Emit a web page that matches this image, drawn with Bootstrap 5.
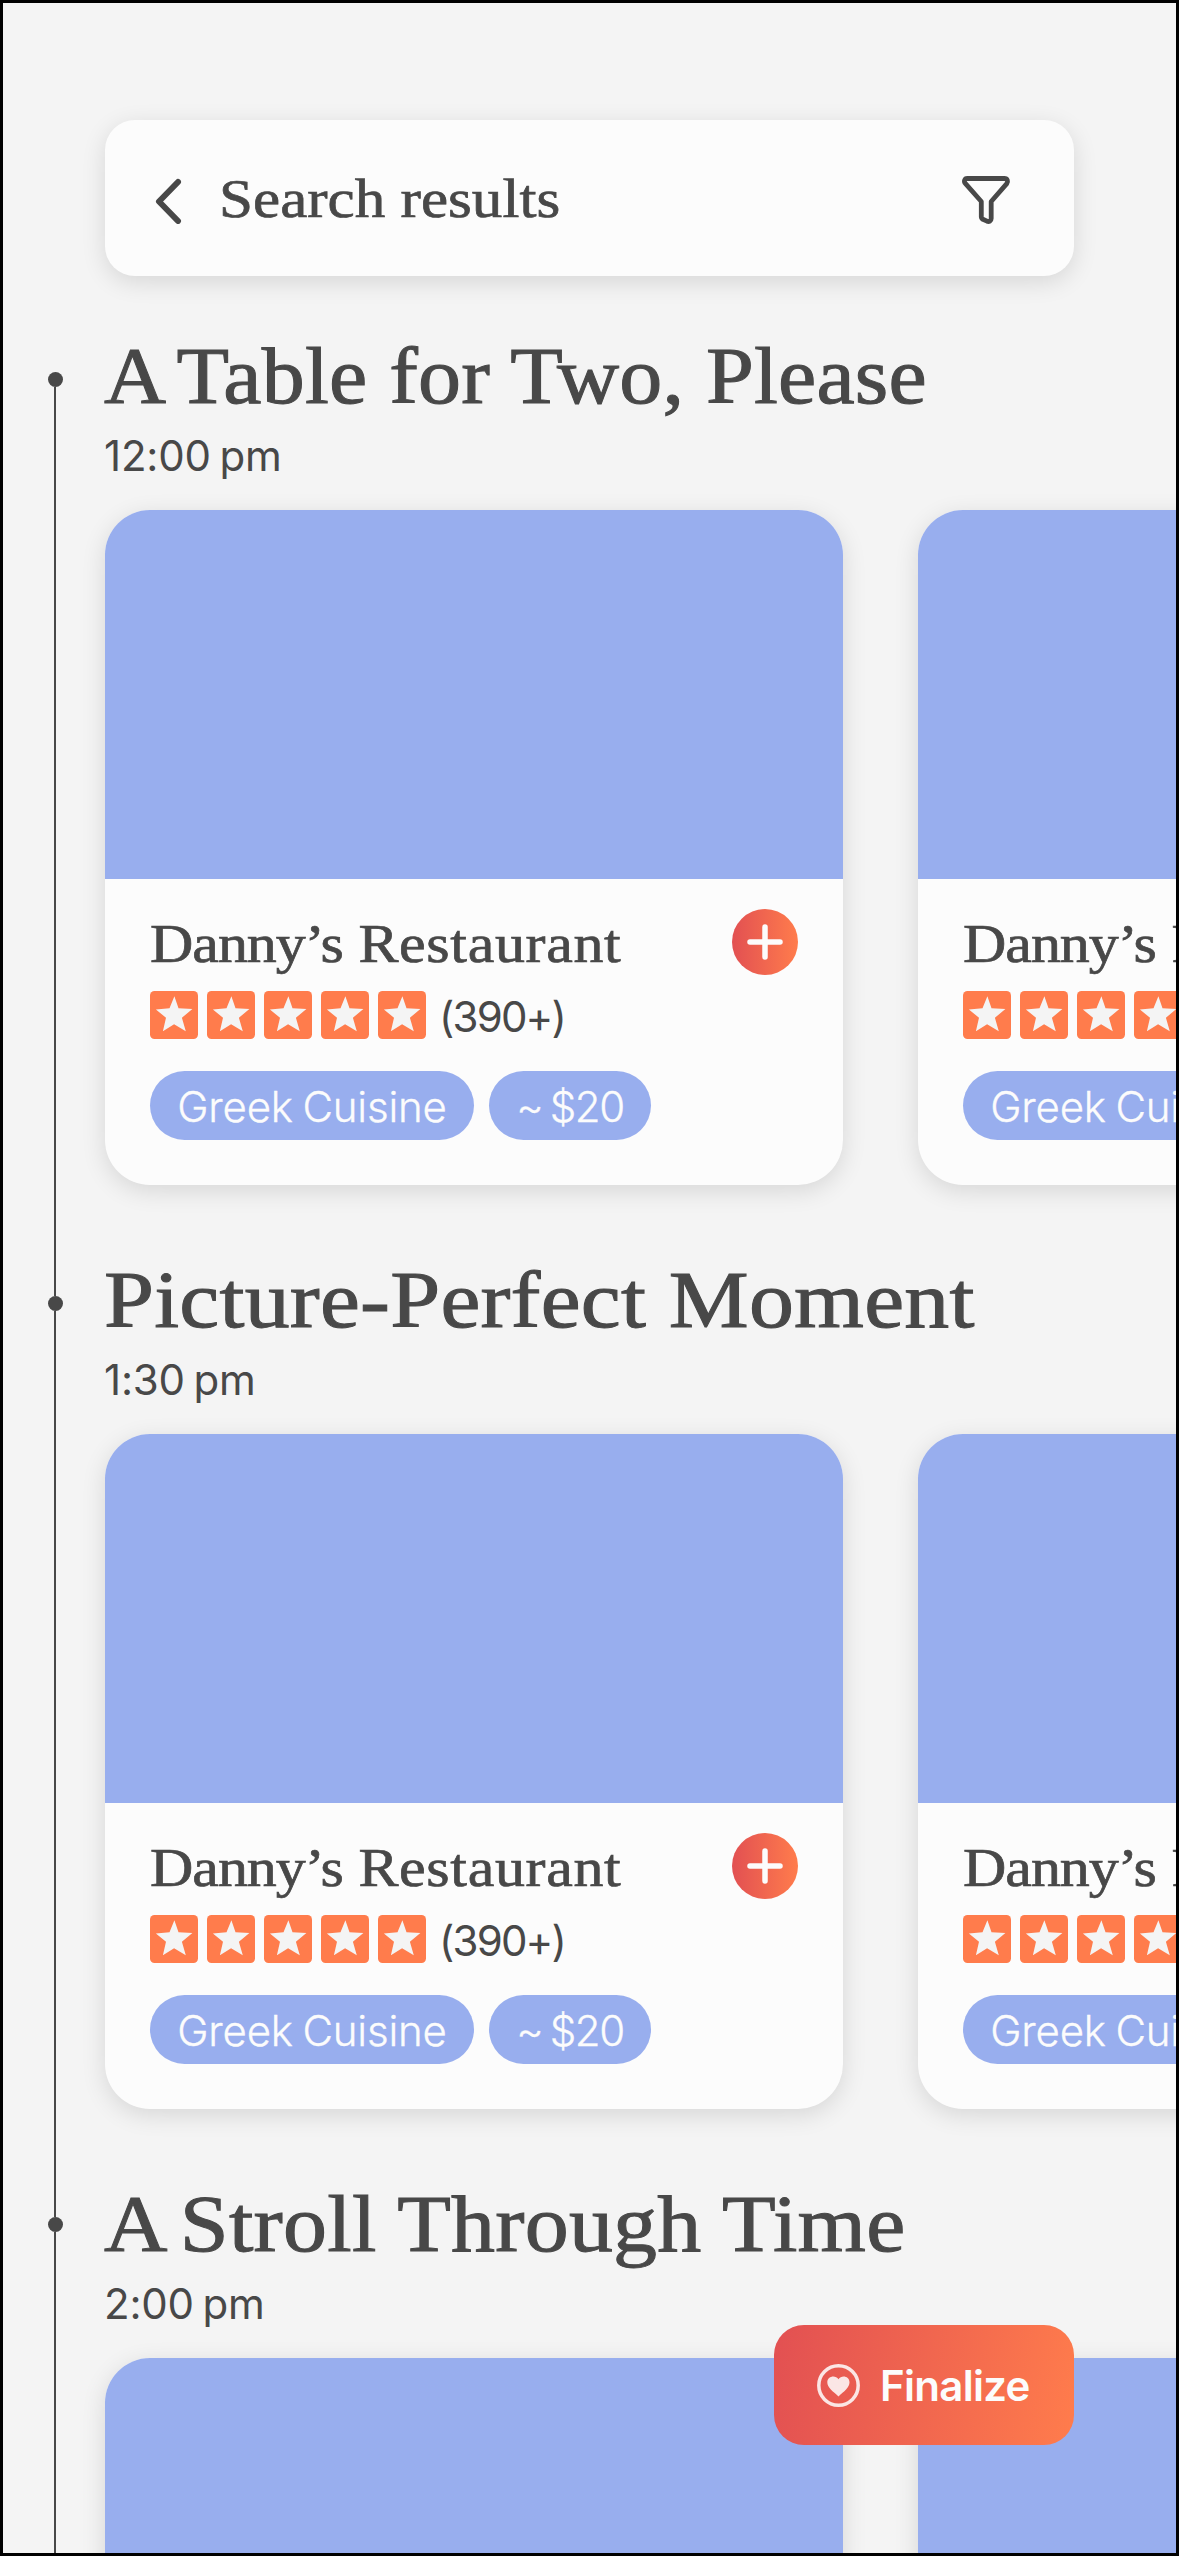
<!DOCTYPE html>
<html lang="en">
<head>
<meta charset="utf-8">
<meta name="viewport" content="width=device-width, initial-scale=1">
<title>Search results</title>
<link href="https://cdn.jsdelivr.net/npm/bootstrap@5.3.0/dist/css/bootstrap.min.css" rel="stylesheet">
<style>
  body { margin: 0; background: #f4f4f4; color: #484848; font-family: Inter, "Liberation Sans", sans-serif; font-size: 42px; }
  .screen { width: 1179px; height: 2556px; border: 3px solid #000; }
  /* Expanded serif: regular letterforms widened from their left edge */
  .serif { font-family: "Liberation Serif", serif; font-weight: 400; -webkit-text-stroke: .7px currentColor; transform-origin: 0 50%; white-space: nowrap; }
  .soft-shadow { box-shadow: 0 6px 24px rgba(0, 0, 0, .12); }
  .topbar { margin: 117px 102px 42px; height: 156px; border-radius: 30px; background: #fcfcfc; padding: 0 60px 0 48px; }
  .topbar-title { font-size: 54px; line-height: 66px; transform: scaleX(1.132); margin: 2px 0 0 34px; }
  .stop { height: 924px; }
  .rail { width: 102px; flex: none; padding-left: 1px; }
  .rail-line { width: 2px; background: #484848; }
  .rail-top { height: 54px; }
  .stop:last-child .rail-top { height: 51px; }
  .rail-start { background: transparent; }
  .rail-dot { width: 15px; height: 15px; border-radius: 50%; background: #484848; margin-left: 1px; }
  .stop-title { font-size: 80px; line-height: 96px; margin: 10px 0 0 -1px; width: max-content; letter-spacing: .2px; -webkit-text-stroke-width: 1px; }
  .wide-table { transform: scaleX(1.075); }
  .wide-picture { transform: scaleX(1.123); }
  .wide-stroll { transform: scaleX(1.099); }
  .tight-a { letter-spacing: -9px; }
  .stop-time { line-height: 50px; margin: 7px 0 29px -1px; word-spacing: -3px; letter-spacing: -.2px; }
  .places { gap: 75px; }
  .place { width: 738px; height: 675px; flex: none; border: 0; border-radius: 45px; background: #fcfcfc; color: inherit; }
  .place-photo { height: 369px; background: #98aeee; border-radius: 45px 45px 0 0; }
  .place-body { padding: 30px 45px 45px; }
  .place-head { height: 66px; }
  .place-name { font-size: 54px; line-height: 66px; letter-spacing: .6px; transform: scaleX(1.11); margin: 2px 0 0; }
  .tight-name { letter-spacing: -.9px; }
  .warm { background: linear-gradient(100deg, #e25052, #ff7c4c); }
  .add-btn { width: 66px; height: 66px; border: 0; padding: 0; border-radius: 50%; background: linear-gradient(90deg, #e25052, #ff7c4c); }
  .rating { gap: 9px; margin-top: 16px; height: 48px; }
  .reviews { margin: 4px 0 0 4px; letter-spacing: -1.8px; line-height: 50px; }
  .tags { gap: 15px; margin-top: 32px; }
  .tag { height: 69px; line-height: 71px; border-radius: 35px; background: #98aeee; color: #fcfcfc; font-weight: 300; text-align: center; white-space: nowrap; -webkit-text-stroke: .3px currentColor; }
  .tag-kind { width: 324px; word-spacing: -2px; letter-spacing: -.2px; }
  .tag-price { width: 162px; word-spacing: -3px; letter-spacing: -1.4px; }
  .finalize { right: 102px; bottom: 108px; width: 300px; height: 120px; border: 0; border-radius: 30px; color: #fcfcfc; padding: 0 0 0 42px; font-weight: 600; letter-spacing: -.7px; }
  .finalize svg { margin-right: 19px; }
  svg { display: block; flex: none; }
</style>
</head>
<body>
<svg width="0" height="0" class="position-absolute" aria-hidden="true">
  <symbol id="star" viewBox="0 0 48 48">
    <rect width="48" height="48" rx="4.5" fill="#ff7c4c"/>
    <path fill="#f4f4f4" d="M24.4 5.3 28.500 17.200 42.400 18 31.900 26.800 35.800 40.200 24.100 33.300 12.900 40.200 16 26.800 5.900 18.600 19.500 17.200Z"/>
  </symbol>
</svg>
<main class="screen position-relative overflow-hidden">
  <header class="topbar soft-shadow d-flex align-items-center">
    <svg width="32" height="52" viewBox="0 0 32 52" fill="none" stroke="#484848" stroke-width="6" stroke-linecap="round" stroke-linejoin="round"><path d="M25 10 6 29.500 25 49"/></svg>
    <h1 class="topbar-title serif">Search results</h1>
    <svg class="ms-auto" width="56" height="56" viewBox="0 0 56 56" fill="none" stroke="#484848" stroke-width="4.800" stroke-linejoin="round"><path d="M9.300 8.500H46.300C49.500 8.500 50.300 11.500 48.800 13.600L33.200 31.500V48.500C33.200 51 31 52 29 51.200L24.300 49Q23.300 48.300 23.300 47V31.500L7.500 13.600C5.500 11.500 6.500 8.500 9.300 8.500Z"/></svg>
  </header>
  <div id="stops"></div>
  <button class="finalize warm position-absolute d-flex align-items-center">
    <svg width="45" height="45" viewBox="0 0 45 45"><g opacity=".85"><circle cx="22.500" cy="22.500" r="19.700" fill="none" stroke="#fff" stroke-width="3.500"/><path fill="#fff" d="M22.500 33.500C17 28.500 11.300 24.500 11.300 19.300 11.300 13 19.500 11.500 22.500 16.200 25.500 11.500 33.500 13 33.500 19.300 33.500 24.500 28 28.500 22.500 33.500Z"/></g></svg>
    <span>Finalize</span>
  </button>
</main>
<script>
  const stops = [
    ['<span class="tight-a">A</span> Table for Two, Please', "12:00 pm", "wide-table"],
    ["Picture-Perfect Moment", "1:30 pm", "wide-picture"],
    ['<span class="tight-a">A</span> Stroll Through Time', "2:00 pm", "wide-stroll"]
  ];
  const star = '<svg width="48" height="48"><use href="#star"/></svg>';
  const place = `
    <article class="place card soft-shadow">
      <div class="place-photo"></div>
      <div class="place-body">
        <div class="place-head d-flex justify-content-between">
          <h3 class="place-name serif"><span class="tight-name">Danny’s</span> Restaurant</h3>
          <button class="add-btn" aria-label="Add"><svg width="66" height="66" viewBox="0 0 66 66" stroke="#fcfcfc" stroke-width="5.500" stroke-linecap="round"><path d="M33 18V48M18 33H48"/></svg></button>
        </div>
        <div class="rating d-flex align-items-center">${star.repeat(5)}<span class="reviews">(390+)</span></div>
        <div class="tags d-flex"><span class="tag tag-kind">Greek Cuisine</span><span class="tag tag-price">~ $20</span></div>
      </div>
    </article>`;
  document.getElementById("stops").innerHTML = stops.map(([title, time, width], i) => `
    <section class="stop d-flex">
      <div class="rail d-flex flex-column align-items-center">
        <div class="rail-line rail-top ${i ? "" : "rail-start"}"></div>
        <div class="rail-dot"></div>
        <div class="rail-line flex-grow-1"></div>
      </div>
      <div>
        <h2 class="stop-title serif ${width}">${title}</h2>
        <p class="stop-time">${time}</p>
        <div class="places d-flex">${place.repeat(2)}</div>
      </div>
    </section>`).join("");
</script>
<script src="https://cdn.jsdelivr.net/npm/bootstrap@5.3.0/dist/js/bootstrap.bundle.min.js"></script>
</body>
</html>
